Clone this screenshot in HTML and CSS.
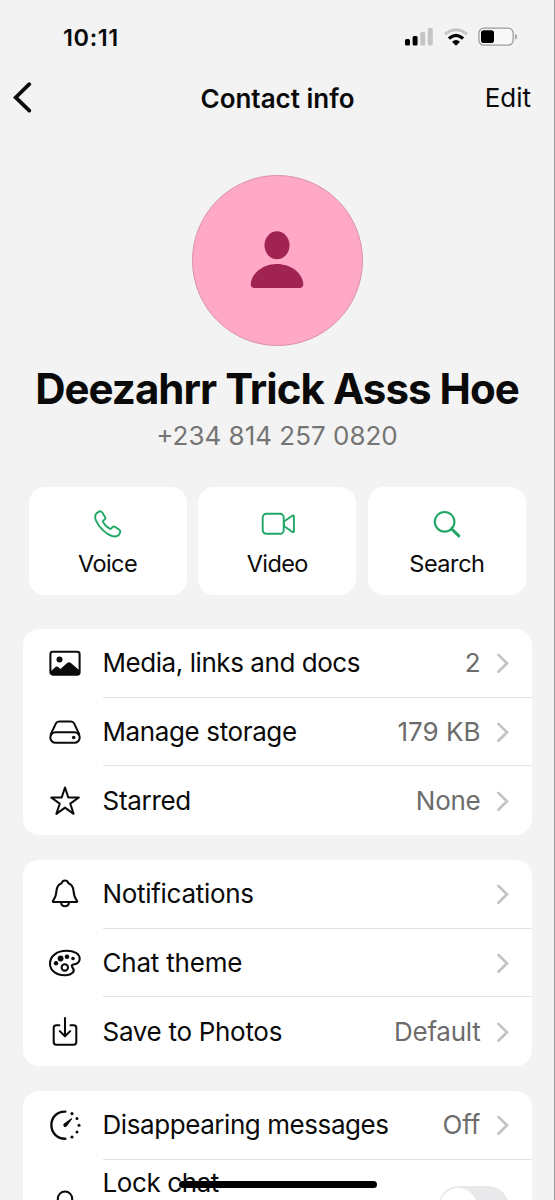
FILE: index.html
```html
<!DOCTYPE html>
<html lang="en">
<head>
<meta charset="utf-8">
<title>Contact info</title>
<link rel="stylesheet" href="styles.css">
</head>
<body>
<svg class="defs" width="0" height="0"><symbol id="chevron" viewBox="0 0 14 22"><path d="M2.4 2.9 11 11.3 2.4 19.7" fill="none" stroke="#c3c3c6" stroke-width="2.7" stroke-linecap="round" stroke-linejoin="miter"/></symbol></svg>
<div class="screen">
  <header class="status">
    <span class="time">10:11</span>
    <div class="indicators">
      <svg width="28" height="18" viewBox="0 0 28 18"><rect x="0" y="11" width="5" height="6.5" rx="1.5"/><rect x="7.6" y="8" width="5" height="9.5" rx="1.5"/><rect x="15.2" y="4" width="5" height="13.5" rx="1.5" fill="#c5c5c5"/><rect x="22.8" y="0" width="5" height="17.5" rx="1.5" fill="#c5c5c5"/></svg>
      <svg class="wifi" width="24" height="18" viewBox="0 0 24 18"><g fill="none" stroke-width="3.1"><path d="M1 6.2Q12-2.7 23 6.2" stroke="#c5c5c5"/><path d="M4.9 10.5Q12 4.2 19.1 10.5" stroke="#000"/></g><path d="M8 13.7Q12 10.5 16 13.7L12 17.7Z"/></svg>
      <svg width="40" height="20" viewBox="0 0 40 20"><rect x=".9" y="1.2" width="34.3" height="17" rx="5" fill="#f8f8f8" stroke="#9c9c9c" stroke-width="1.3"/><rect x="3" y="3.2" width="13" height="12.8" rx="2.8"/><path d="M37 7q2 .7 2 2.8t-2 2.8z" fill="#9c9c9c"/></svg>
    </div>
  </header>
  <nav class="nav">
    <svg class="back" width="20" height="32" viewBox="0 0 20 32"><path d="M17.3 2.2 3.7 15.4 17.3 28.6" fill="none" stroke="#0a0a0a" stroke-width="3.7" stroke-linecap="round"/></svg>
    <h1 class="title">Contact info</h1>
    <span class="edit">Edit</span>
  </nav>
  <section class="profile">
    <div class="avatar"><svg width="54" height="58" viewBox="0 0 54 58" fill="#a12352"><ellipse cx="27" cy="14.3" rx="12.5" ry="14"/><path d="M4.5 57C1.7 57 .5 55.5.7 52.8 1.7 42 13 33 27 33S52.3 42 53.3 52.8C53.5 55.5 52.3 57 49.5 57Z"/></svg></div>
    <h2 class="name">Deezahrr Trick Asss Hoe</h2>
    <p class="phone">+234 814 257 0820</p>
  </section>
  <section class="actions">
    <div class="action"><svg width="36" height="32" viewBox="0 0 36 32"><path d="M9.2 3.5C5 5 4.3 8.6 6 12.6 9.1 19.5 15.7 25.8 22 28c3.9 1.1 7.1-.3 8.2-3.8.3-1-.1-1.8-.9-2.4L24.8 18.8c-.9-.5-1.8-.3-2.4.4l-1.1 1.3c-.4.5-1 .5-1.6.2-2.7-1.5-5-3.8-6.6-6.5-.3-.6-.3-1.1.3-1.6l1.4-1.1c.7-.6.9-1.4.3-2.3L12.3 4.5C11.5 3.5 10.4 3 9.2 3.5Z"/></svg><span class="l-voice">Voice</span></div>
    <div class="action"><svg class="video" width="36" height="32" viewBox="0 0 36 32"><rect x="2.7" y="5.8" width="21" height="20" rx="3.6"/><path d="M24 13.6 32.3 7.7Q33.9 7 33.9 8.8V23Q33.9 24.7 32.3 23.9L24 18Z"/></svg><span class="l-video">Video</span></div>
    <div class="action"><svg width="36" height="32" viewBox="0 0 36 32"><circle cx="15.6" cy="13.8" r="9.8" stroke-width="2.1"/><path d="M22.5 20.7 29.8 27.9" stroke-width="3" stroke-linecap="round"/></svg><span class="l-search">Search</span></div>
  </section>
  <main class="groups">
    <section class="card">
      <div class="row"><svg class="icon" viewBox="0 0 34 34"><rect x="2.4" y="5.8" width="29.2" height="22.8" rx="2.4"/><circle cx="11.5" cy="13.4" r="3" class="solid"/><path d="m3 25 4.8-4.2Q9 19.9 10.2 21l2.2 2 6.7-6q1.9-1.7 3.8 0L31 24v4H3Z" class="solid"/></svg><div class="content"><span class="l-media">Media, links and docs</span><span class="value">2</span><svg class="chev"><use href="#chevron"/></svg></div></div>
      <div class="row"><svg class="icon" viewBox="0 0 34 34"><path d="M2.6 19.6 7.9 8.4Q8.9 6.4 11 6.4H23Q25.1 6.4 26.1 8.4L31.4 19.6"/><rect x="2.3" y="17.2" width="29.4" height="10.6" rx="5.3"/><circle cx="25.7" cy="22.5" r="1.8" class="solid"/></svg><div class="content"><span class="l-storage">Manage storage</span><span class="value v-kb">179 KB</span><svg class="chev"><use href="#chevron"/></svg></div></div>
      <div class="row"><svg class="icon" viewBox="0 0 34 34"><path d="m17 3.5 3.3 10H30.8l-8.5 6.2 3.3 10.1-8.6-6.2-8.6 6.2 3.3-10.1-8.5-6.2H13.7Z"/></svg><div class="content"><span class="l-starred">Starred</span><span class="value v-none">None</span><svg class="chev"><use href="#chevron"/></svg></div></div>
    </section>
    <section class="card">
      <div class="row"><svg class="icon" viewBox="0 0 34 34"><path d="M5.4 25C4.7 25 4.6 24.4 5 23.8 7.4 20.8 8.2 18.5 8.5 13.8 8.9 9.5 10.8 7.1 13.6 6.2 14.2 4.3 15.3 3.5 17 3.5s2.8.8 3.4 2.7C23.2 7.1 25.1 9.5 25.5 13.8 25.8 18.5 26.6 20.8 29 23.8 29.4 24.4 29.3 25 28.6 25ZM13 25.4Q13.4 29.3 17 29.3T21 25.4"/></svg><div class="content"><span class="l-notif">Notifications</span><svg class="chev"><use href="#chevron"/></svg></div></div>
      <div class="row"><svg class="icon" viewBox="0 0 34 34"><path d="M18 29.2C8.3 29.7 2 24.4 2 17.7 2 9.9 9.2 4.8 18.5 4.8c7.6 0 13.2 3 13.2 8.1 0 4.8-4.1 5.2-7.1 5.9-1.7.5-.5 2.1.2 3 2.9 3.8-1.3 7.1-6.8 7.4Z"/><circle cx="8" cy="17.3" r="2.2" class="dot"/><circle cx="12.6" cy="12.5" r="2.9" class="dot"/><circle cx="19" cy="10.8" r="2.3" class="dot"/><circle cx="25" cy="12.5" r="1.8" class="dot"/><circle cx="16.8" cy="21.4" r="3.2"/></svg><div class="content"><span class="l-theme">Chat theme</span><svg class="chev"><use href="#chevron"/></svg></div></div>
      <div class="row"><svg class="icon" viewBox="0 0 34 34"><path d="M11.4 10.2H8.3Q5.7 10.2 5.7 12.8V27.1Q5.7 29.7 8.3 29.7H25.7Q28.3 29.7 28.3 27.1V12.8Q28.3 10.2 25.7 10.2H22.5M17 3V20.8M11.8 16.1 17 21.3 22.2 16.1" stroke-linecap="round"/></svg><div class="content"><span class="l-save">Save to Photos</span><span class="value v-default">Default</span><svg class="chev"><use href="#chevron"/></svg></div></div>
    </section>
    <section class="card">
      <div class="row"><svg class="icon" viewBox="0 0 34 34"><path d="M17.3 3.6C8.8 3.5 3.4 9.3 3.4 17.1S9 30.8 17.3 30.8" stroke-width="2.4" stroke-linecap="round"/><path d="m16 15.6 7.3-5.3q1.2-.4.8.8l-5.3 7.2q-1.5 1.6-3 .1-1.3-1.4.2-2.8Z" class="dot"/><circle cx="24" cy="5.6" r="1.6" class="dot"/><circle cx="29" cy="10.5" r="1.5" class="dot"/><circle cx="31" cy="17.2" r="1.5" class="dot"/><circle cx="29" cy="24" r="1.5" class="dot"/><circle cx="24" cy="29" r="1.6" class="dot"/></svg><div class="content"><span class="l-disappear">Disappearing messages</span><span class="value v-off">Off</span><svg class="chev"><use href="#chevron"/></svg></div></div>
      <div class="row lock"><svg class="icon" viewBox="0 0 34 34"><path d="M9.8 16V10.7a7.2 7.2 0 0 1 14.4 0V16M7 14.7H27V31H7Z"/></svg><div class="content"><span class="l-lock">Lock chat</span><span class="toggle"></span></div></div>
    </section>
  </main>
  <div class="home"></div>
</div>
</body>
</html>
```
FILE: styles.css
```css
* { box-sizing: border-box; margin: 0; padding: 0; }
body { background: #f3f3f3; font-family: Inter, "Liberation Sans", sans-serif; color: #0a0a0a; }
.defs { display: block; }
.screen { position: relative; height: 1200px; width: 555px; overflow: hidden; border-right: 1px solid #9a9a9a; background: #f3f3f3; }
.status { height: 74px; padding: 0 36px 0 63px; display: flex; align-items: center; justify-content: space-between; }
.time { font-size: 23.5px; font-weight: 600; letter-spacing: .6px; padding-top: 1px; }
.indicators { display: flex; align-items: center; }
.wifi { margin: 0 10px 0 11px; }
.nav { height: 48px; padding: 0 22px 0 23px; display: grid; grid-template-columns: 1fr auto 1fr; align-items: center; }
.back { margin-left: -12px; transform: translateX(1px); }
.title { font-size: 26px; font-weight: 600; }
.edit { font-size: 26px; text-align: right; line-height: 30px; padding-right: 1px; }
.profile { height: 365px; padding-top: 53px; display: flex; flex-direction: column; align-items: center; white-space: nowrap; }
.avatar { width: 171px; height: 171px; border-radius: 50%; background: #ffa9c7; border: 1.5px solid #d990ac; display: flex; align-items: center; justify-content: center; padding-bottom: 2px; }
.name { margin-top: 17px; font-size: 42px; line-height: 52px; font-weight: 700; letter-spacing: -.95px; }
.phone { margin-top: 4px; font-size: 26px; line-height: 34px; color: #757575; }
.actions { padding: 0 28px 0 28.5px; display: grid; grid-template-columns: repeat(3, 1fr); gap: 11.5px; }
.action { height: 108px; border-radius: 16px; background: #fff; display: flex; flex-direction: column; align-items: center; padding-top: 20.5px; font-size: 23.5px; line-height: 30px; letter-spacing: -.6px; }
.action svg { fill: none; stroke: #20a765; stroke-width: 1.9; stroke-linejoin: round; margin-bottom: 9.5px; flex: none; }
.action .video { margin-left: 2px; }
.l-search { letter-spacing: -.45px; }
.groups { padding: 34px 22.5px 0 23px; display: flex; flex-direction: column; gap: 25px; }
.card { border-radius: 16px; background: #fff; overflow: hidden; }
.row { height: 68.7px; display: flex; align-items: center; padding-left: 25px; font-size: 26px; white-space: nowrap; }
.icon { width: 34px; height: 34px; flex: none; margin-right: 20.5px; fill: none; stroke: #0a0a0a; stroke-width: 2.05; stroke-linejoin: round; }
.icon .solid { fill: #0a0a0a; stroke-width: 0; }
.icon .dot { fill: #0a0a0a; stroke: none; }
.content { flex: 1; height: 100%; display: flex; align-items: center; padding-right: 22px; border-bottom: 1px solid #e3e3e3; }
.row:last-child .content { border-bottom: 0; }
.l-media { letter-spacing: -.44px; }
.l-storage { letter-spacing: -.38px; }
.l-starred { letter-spacing: -.3px; }
.l-notif { letter-spacing: -.3px; }
.l-theme { letter-spacing: -.2px; }
.l-save { letter-spacing: -.3px; }
.l-disappear { letter-spacing: -.43px; }
.l-lock { letter-spacing: -.4px; }
.value { margin-left: auto; color: #6c6c6c; }
.v-none, .v-default { letter-spacing: -.25px; }
.chev { width: 14px; height: 22px; margin-left: 15px; flex: none; }
.content > span:first-child + .chev { margin-left: auto; }
.lock { align-items: flex-start; }
.lock .icon { margin-top: 28px; }
.lock .content { align-items: flex-start; padding-top: 7px; padding-right: 23px; }
.toggle { margin-left: auto; margin-top: 19px; width: 71px; height: 42px; border-radius: 21px; background: #e9e9eb; padding: 2.5px; }
.toggle::before { content: ""; display: block; width: 37px; height: 37px; border-radius: 50%; background: #fff; }
.home { position: absolute; left: 179px; top: 1181px; width: 198px; height: 7px; border-radius: 4px; background: #000; }
```
